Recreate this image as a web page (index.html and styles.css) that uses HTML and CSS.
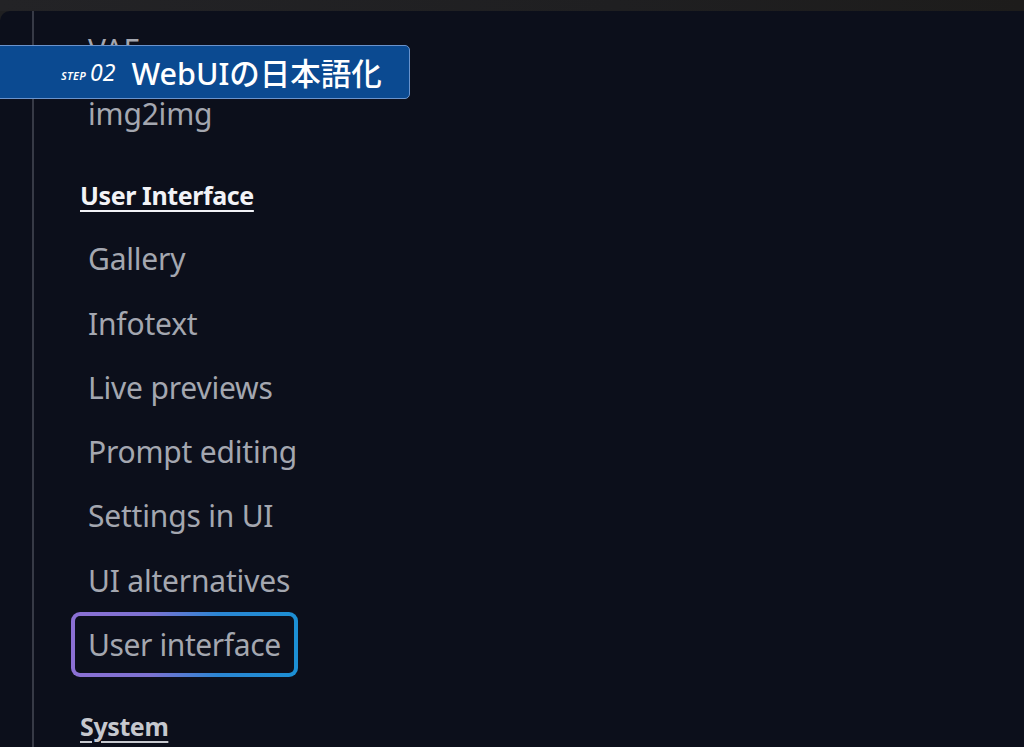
FILE: index.html
```html
<!DOCTYPE html>
<html lang="ja">
<head>
<meta charset="utf-8">
<link rel="stylesheet" href="styles.css">
</head>
<body>
<div class="topbar"></div>
<div class="panel">
  <div class="rail"></div>
  <nav class="list">
    <div class="item">VAE</div>
    <div class="item">img2img</div>
    <div class="heading">User Interface</div>
    <div class="item">Gallery</div>
    <div class="item">Infotext</div>
    <div class="item">Live previews</div>
    <div class="item">Prompt editing</div>
    <div class="item">Settings in UI</div>
    <div class="item">UI alternatives</div>
    <div class="item active">User interface</div>
    <div class="heading dim">System</div>
  </nav>
</div>
<div class="banner">
  <span class="step">STEP</span><span class="num">02</span><span class="title">WebUIの日本語化</span>
</div>
</body>
</html>
```
FILE: styles.css
```css
html, body {
  margin: 0;
  padding: 0;
  width: 1024px;
  height: 747px;
  overflow: hidden;
  background: #1f1f21;
  font-family: "Noto Sans", "Noto Sans CJK JP", sans-serif;
}
.topbar {
  height: 11px;
  background: linear-gradient(90deg, #232326, #1f1f21 60%, #1d1c1b);
}
.panel {
  height: 736px;
  background: #0c0f1b;
  border-top-left-radius: 10px;
  display: flex;
  overflow: hidden;
}
.rail {
  width: 2px;
  margin-left: 32px;
  background: #373a46;
  flex: none;
}
.list {
  margin-left: 37px;
  padding-top: 6px;
  display: flex;
  flex-direction: column;
  align-items: flex-start;
}
.item {
  flex: none;
  height: 64.3px;
  display: flex;
  align-items: center;
  padding: 0 17px;
  font-size: 30px;
  color: #a4a7b0;
  box-sizing: border-box;
  letter-spacing: -0.2px;
}
.item.active {
  border: 4px solid transparent;
  border-radius: 9px;
  padding: 0 13px;
  letter-spacing: -0.4px;
  background:
    linear-gradient(#0c0f1b, #0c0f1b) padding-box,
    linear-gradient(90deg, #8c70d4 0%, #7d72d2 35%, #2b86d4 65%, #1c8fd4 100%) border-box;
}
.heading {
  flex: none;
  height: 64px;
  margin-top: 17px;
  display: flex;
  align-items: center;
  padding-left: 9px;
  font-size: 25px;
  font-weight: 700;
  color: #f2f3f7;
  text-decoration: underline;
  text-decoration-thickness: 2px;
  text-underline-offset: 5px;
  letter-spacing: -0.4px;
}
.heading.dim {
  color: #c6c8ce;
}
.banner {
  position: absolute;
  left: -2px;
  top: 45px;
  width: 412px;
  height: 54px;
  box-sizing: border-box;
  background: #0b4a91;
  border: 1px solid #6a93cc;
  border-radius: 0 5px 5px 0;
  display: flex;
  align-items: center;
  padding-left: 62px;
  color: #ffffff;
}
.step {
  font-size: 11px;
  font-style: italic;
  font-weight: 600;
  letter-spacing: 0.3px;
  margin-top: 6px;
}
.num {
  font-size: 23px;
  font-style: italic;
  margin-left: 4px;
  margin-right: 16px;
}
.title {
  font-size: 30.5px;
  font-weight: 500;
}
```
